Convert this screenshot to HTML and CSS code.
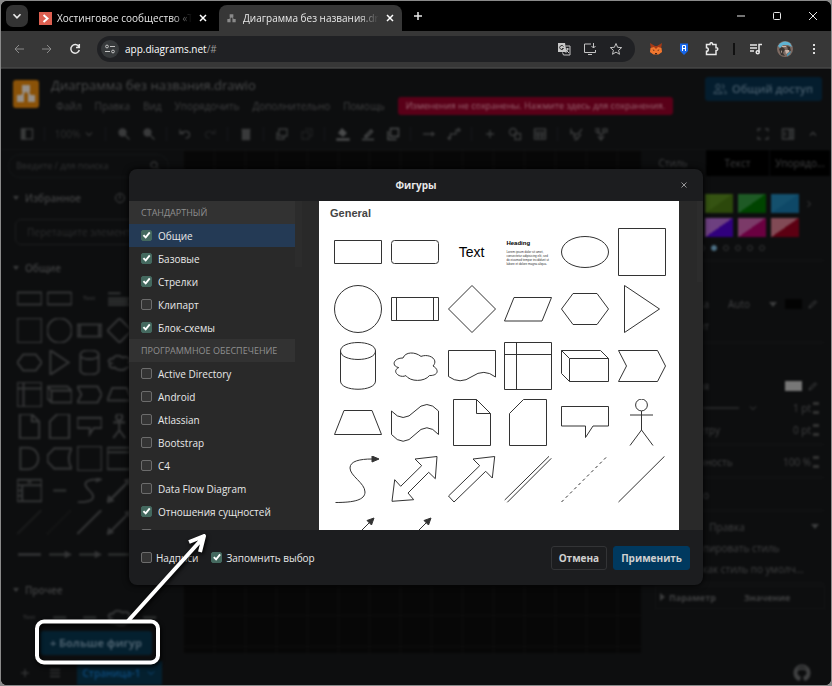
FILE: index.html
```html
<!DOCTYPE html>
<html lang="ru">
<head>
<meta charset="utf-8">
<title>Диаграмма без названия.drawio</title>
<link rel="stylesheet" href="styles.css">
</head>
<body>
<svg class="defs" aria-hidden="true">
  <symbol id="rect" viewBox="0 0 48 48"><path d="M.5 12.5h47v23H.5z"/></symbol>
  <symbol id="round" viewBox="0 0 48 48"><rect x=".5" y="12.5" width="47" height="23" rx="3"/></symbol>
  <symbol id="ellipse" viewBox="0 0 48 48"><ellipse cx="24" cy="24" rx="23.5" ry="15.5"/></symbol>
  <symbol id="square" viewBox="0 0 48 48"><path d="M.5.5h47v47H.5z"/></symbol>
  <symbol id="circle" viewBox="0 0 48 48"><circle cx="24" cy="24" r="23.5"/></symbol>
  <symbol id="process" viewBox="0 0 48 48"><path d="M.5 12.5h47v23H.5zM5.500 12.500v23M42.500 12.500v23"/></symbol>
  <symbol id="diamond" viewBox="0 0 48 48"><path d="M24 .5 47.500 24 24 47.500.5 24z"/></symbol>
  <symbol id="para" viewBox="0 0 48 48"><path d="M.5 36 10 12.500h37.500L38 36z"/></symbol>
  <symbol id="hex" viewBox="0 0 48 48"><path d="M.5 24 12 8.500h24L47.500 24 36 39.500H12z"/></symbol>
  <symbol id="tri" viewBox="0 0 48 48"><path d="M6.500.5 41.500 24 6.500 47.500z"/></symbol>
  <symbol id="cyl" viewBox="0 0 48 48"><path d="M6.500 9v30c0 11 35 11 35 0V9c0-11.300-35-11.300-35 0c0 11.300 35 11.300 35 0"/></symbol>
  <symbol id="cloud" viewBox="0 0 48 48"><path d="M12 16C2.400 16 0 24 7.700 25.600 0 29.100 8.600 36.800 14.900 33.600 19.200 40 33.600 40 38.400 33.600 48 33.600 48 27.200 42 24 48 17.600 38.400 11.200 30 14.400 24 9.600 14.400 9.600 12 16z"/></symbol>
  <symbol id="doc" viewBox="0 0 48 48"><path d="M.5 8.500h47V35Q36 26 24 34.500T.5 34.500z"/></symbol>
  <symbol id="storage" viewBox="0 0 48 48"><path d="M.5.5h47v47H.5zM12.500.5v47M.5 12.500h47"/></symbol>
  <symbol id="cube" viewBox="0 0 48 48"><path d="M.5 8.500h39l8 8v23h-39l-8-8zM.5 8.500l8 8v23M8.500 16.500h39"/></symbol>
  <symbol id="step" viewBox="0 0 48 48"><path d="M.5 8.500h39l8 15.500-8 15.500H.5L8.500 24z"/></symbol>
  <symbol id="trap" viewBox="0 0 48 48"><path d="M.5 35.500 10 11.500h28l9.500 24z"/></symbol>
  <symbol id="tape" viewBox="0 0 48 48"><path d="M.5 12Q12 25 24 12T47.500 12V35.500Q36 22 24 35.500T.5 35.500z"/></symbol>
  <symbol id="note" viewBox="0 0 48 48"><path d="M5.500.5h23l14 14v32h-37zM28.500.5v14h14"/></symbol>
  <symbol id="card" viewBox="0 0 48 48"><path d="M19.500.5h23v46h-37v-32z"/></symbol>
  <symbol id="callout" viewBox="0 0 48 48"><path d="M.5 7.500h47v19.500H32L24.500 38.500V27H.5z"/></symbol>
  <symbol id="actor" viewBox="0 0 48 48"><circle cx="23.500" cy="6" r="5.900"/><path d="M23.500 12v19M12 16h23M12 46.500 23.500 31 35 46.500"/></symbol>
  <symbol id="curve" viewBox="0 0 48 48"><path d="M1.500 46.500C20 46.500 31 44 31 36C31 27 16 20 16 12C16 5 26 3 38 3"/><path class="tip" d="M38 0 45 3 38 6z"/></symbol>
  <symbol id="biarrow" viewBox="0 0 48 48"><path d="M46 .5 24 3l6.700 6.700-21 20.600-6-6.600L1 45.300l21.700-1.600L17 37l20.700-20.700 6.600 6.400z"/></symbol>
  <symbol id="arrow" viewBox="0 0 48 48"><path d="M46.700.5 25 3l6.700 6.700L.5 40 6 46l31.700-30.700L44.300 22z"/></symbol>
  <symbol id="link" viewBox="0 0 48 48"><path d="M.7 44 45 .3M3.300 46.300 47.300 2.300"/></symbol>
  <symbol id="dashed" viewBox="0 0 48 48"><path stroke-dasharray="3 3" d="M.5 46 46 .5"/></symbol>
  <symbol id="line" viewBox="0 0 48 48"><path d="M.5 46 46.500.3"/></symbol>
  <symbol id="pointer" viewBox="0 0 48 48"><path d="M.5 44.500 36 9"/><path class="tip" d="M40 5 37.500 12 33 7.500z"/></symbol>
  <symbol id="dline" viewBox="0 0 48 48"><path d="M5 43 42 6"/><path class="tip" d="M46 2 43 11 37 5zM1 46 4 37 10 43z"/></symbol>
  <symbol id="delay" viewBox="0 0 48 48"><path d="M6.500 3.500H20C48 3.500 48 44.500 20 44.500H6.500z"/></symbol>
  <symbol id="data" viewBox="0 0 48 48"><path d="M14 4.500H47.500Q36 24 47.500 43.500H14L1 30V18z"/></symbol>
  <symbol id="frame" viewBox="0 0 48 48"><path d="M.5 3.500h47v41H.5zM.5 12h47"/></symbol>
  <symbol id="table" viewBox="0 0 48 48"><path d="M.5 3.500h47v41H.5zM.5 14h47M10 14v30M.5 24H10M.5 34H10M20 8h8"/></symbol>
  <symbol id="dash" viewBox="0 0 48 48"><path d="M12 24h25"/></symbol>
  <symbol id="hline" viewBox="0 0 48 48"><path d="M2 24h44"/></symbol>
  <symbol id="harrow" viewBox="0 0 48 48"><path d="M4 24h34"/><path class="tip" d="M36 20 44 24 36 28z"/></symbol>
  <symbol id="words" viewBox="0 0 48 48"><path d="M2 14h24M2 24h44M2 30h40M2 36h44"/></symbol>
  <symbol id="orgchart" viewBox="0 0 26 28"><path fill="none" stroke="currentColor" stroke-width="2" d="M13 9 7 19M13 9l6 10"/><path fill="currentColor" stroke="none" d="M9 5h8v7H9zM4 15h7v7H4zM15 15h7v7h-7z"/></symbol>
  <symbol id="chev" viewBox="0 0 12 12"><path d="M3 4.500 6 7.500 9 4.500"/></symbol>
  <symbol id="pencil" viewBox="0 0 12 12"><path d="M2 10 3 7.500 7 3.500 8.500 5 4.500 9zM8 2.500 10 4.500"/></symbol>
  <symbol id="cross" viewBox="0 0 12 12"><path d="M3 3 9 9M9 3 3 9"/></symbol>
</svg>

<div class="window">
  <header class="tabs">
    <button class="tab-search" aria-label="Поиск вкладок"><svg viewBox="0 0 12 12"><path d="M3 4.500 6 7.500 9 4.500"/></svg></button>
    <div class="tab">
      <svg class="favicon" viewBox="0 0 13 13"><path class="red" d="M0 0h13v13H0z"/><path class="wh" d="M4.500 3 8.500 6.500 4.500 10"/></svg>
      <span class="tab-title">Хостинговое сообщество «Tim</span>
      <button class="plain" aria-label="Закрыть"><svg class="i12"><use href="#cross"/></svg></button>
    </div>
    <div class="tab active">
      <svg class="favicon grey"><use href="#orgchart"/></svg>
      <span class="tab-title">Диаграмма без названия.draw</span>
      <button class="plain" aria-label="Закрыть"><svg class="i12"><use href="#cross"/></svg></button>
    </div>
    <button class="plain new-tab" aria-label="Новая вкладка"><svg class="i12" viewBox="0 0 12 12"><path d="M6 2v8M2 6h8"/></svg></button>
    <div class="win-controls">
      <button class="plain" aria-label="Свернуть"><svg class="i12" viewBox="0 0 12 12"><path d="M2 6h8"/></svg></button>
      <button class="plain" aria-label="Развернуть"><svg class="i12" viewBox="0 0 12 12"><rect x="2.500" y="2.500" width="7" height="7" rx="1"/></svg></button>
      <button class="plain" aria-label="Закрыть окно"><svg class="i12" viewBox="0 0 12 12"><path d="M2 2l8 8M10 2 2 10"/></svg></button>
    </div>
  </header>

  <nav class="browser-bar">
    <button class="nav dim" aria-label="Назад"><svg class="i12" viewBox="0 0 12 12"><path d="M11 6H2M6 2 2 6l4 4"/></svg></button>
    <button class="nav dim" aria-label="Вперёд"><svg class="i12" viewBox="0 0 12 12"><path d="M1 6h9M6 2l4 4-4 4"/></svg></button>
    <button class="nav" aria-label="Обновить"><svg class="i12 bold" viewBox="0 0 12 12"><path d="M9.800 3.600A4.300 4.300 0 1 0 10.300 7M10.300 1v3.500H7"/></svg></button>
    <div class="omnibox">
      <button class="site-info" aria-label="Сведения о сайте"><svg class="i12" viewBox="0 0 12 12"><circle cx="3" cy="3.500" r="1.400"/><path d="M6 3.500h5M1 8.500h5"/><circle cx="9" cy="8.500" r="1.400"/></svg></button>
      <span class="url">app.diagrams.net<i>/#</i></span>
      <svg class="i14" viewBox="0 0 14 14"><path fill="#c8c8c8" stroke="none" d="M1 1h7l1.500 9H1z"/><path stroke="#303030" d="M6.500 4.500A2 2 0 1 0 6.500 6.500H5"/><path d="M8.500 4H13v9H6.500l-1-2.500M8.500 7h4M10.500 6v1c0 2-1 3-2 4M9 8l3 3"/></svg>
      <svg class="i14" viewBox="0 0 14 14"><path d="M8 2H1.500v8.500h11V8M5 12.500h4M10.500 1v5M8.500 4l2 2 2-2"/></svg>
      <svg class="i14" viewBox="0 0 14 14"><path d="M7 1.500 8.600 5.300 12.700 5.600 9.600 8.300 10.500 12.300 7 10.100 3.500 12.300 4.400 8.300 1.300 5.600 5.400 5.300z"/></svg>
    </div>
    <div class="extensions">
      <svg class="i14" viewBox="0 0 14 14"><g stroke="none"><path fill="#a33a17" d="M1 1 6 4h2l5-3-1 6 1 3-3.500 2H4.500L1 10 2 7z"/><path fill="#f0772f" d="M1.500 6 5 5l2 2 2-2 3.500 1 .5 4-3.500 2.500h-5L1 10z"/><path fill="#452015" d="M3.500 7.500 5.500 8 5 9zM10.500 7.500 8.500 8 9 9zM6 11h2v1.200H6z"/></g></svg>
      <svg class="i14" viewBox="0 0 14 14"><path fill="#1766e8" stroke="none" d="M3 1.500h8V9L7 13 3 9z"/><path stroke="#fff" d="M5.500 9V3.500h3V9M5.500 6.500h3"/></svg>
      <svg class="i14 bold" viewBox="0 0 14 14"><path d="M1.500 2.500H5V2a1.300 1.300 0 0 1 2.600 0v.5H11v3.300h.5a1.300 1.300 0 0 1 0 2.600H11v4.100H1.500V9.300a1.800 1.800 0 0 0 0-3.600z"/></svg>
      <span class="bar-sep"></span>
      <svg class="i14 bold" viewBox="0 0 14 14"><path d="M1 3h7M1 6h7M1 9h4M10 10V2.500h3"/><circle cx="8.700" cy="10.200" r="1.500"/></svg>
      <svg class="avatar" viewBox="0 0 16 16"><g stroke="none"><circle cx="8" cy="8" r="8" fill="#7d6a62"/><path fill="#5fb2d2" d="M1 5A8 8 0 0 1 13 2L15 6 11 4 6 4 3 7z"/><path fill="#3b3532" d="M2 8 5 6l3 2-2 4 2 3-4-1zM10 5l3 1 1 4-3-1z"/><path fill="#c9b4a8" d="M5 5h4v1H5zM8 9l4 0 0 2-3 2zM4 9l1 2-1 1z"/><path fill="#4a95b3" d="M10 13l4-3-1 3-3 2.500z"/></g></svg>
      <svg class="i14" viewBox="0 0 14 14"><path fill="#ddd" stroke="none" d="M6 2h2v2H6zM6 6h2v2H6zM6 10h2v2H6z"/></svg>
    </div>
  </nav>

  <div class="stage">
    <div class="app">
      <header class="app-head">
        <svg class="logo"><use href="#orgchart"/></svg>
        <div class="head-main">
          <h1>Диаграмма без названия.drawio</h1>
          <div class="menu">
            <button>Файл</button><button>Правка</button><button>Вид</button><button>Упорядочить</button><button>Дополнительно</button><button>Помощь</button>
            <button class="unsaved">Изменения не сохранены. Нажмите здесь для сохранения.</button>
          </div>
        </div>
        <button class="share"><svg class="i14" viewBox="0 0 14 14"><circle cx="5" cy="4.500" r="2.200"/><path d="M.8 11.500c0-4 8.400-4 8.400 0zM9 2.500a2 2 0 0 1 0 4M11 8.500c2 .5 2.300 1.500 2.300 3h-2"/></svg>Общий доступ</button>
      </header>

      <div class="tools">
        <button aria-label="Панель"><svg class="i14" viewBox="0 0 14 14"><rect x="1.500" y="2" width="11" height="10"/><path fill="currentColor" d="M2 2h3v10H2z"/></svg></button><i class="sep"></i>
        <button class="zoom">100%<svg class="i12"><use href="#chev"/></svg></button><i class="sep"></i>
        <button aria-label="Увеличить"><svg class="i14" viewBox="0 0 14 14"><circle cx="5.500" cy="5.500" r="3.500" fill="currentColor"/><path d="M8 8l4.500 4.500"/></svg></button><button aria-label="Уменьшить"><svg class="i14" viewBox="0 0 14 14"><circle cx="5.500" cy="5.500" r="3.500" fill="currentColor"/><path d="M8 8l4.500 4.500"/></svg></button><i class="sep"></i>
        <button aria-label="Отменить"><svg class="i14" viewBox="0 0 14 14"><path d="M2 2.500v4h4M2.500 6.500C6 3 12 4 11.500 8c0 2-2 3-4 3"/></svg></button><button class="faint" aria-label="Повторить"><svg class="i14" viewBox="0 0 14 14"><path d="M12 2.500v4H8M11.500 6.500C8 3 2 4 2.500 8c0 2 2 3 4 3"/></svg></button><i class="sep"></i>
        <button aria-label="Удалить"><svg class="i14" viewBox="0 0 14 14"><path fill="currentColor" d="M3.500 4h7v8.500h-7zM2.500 2.500h9"/></svg></button><i class="sep"></i>
        <button aria-label="На передний план"><svg class="i14" viewBox="0 0 14 14"><path d="M4 2h8v7H4zM2 5v7h7V9"/></svg></button><button class="faint" aria-label="На задний план"><svg class="i14" viewBox="0 0 14 14"><path d="M5 2h7v7H9M2 5h7v7H2z"/></svg></button><i class="sep"></i>
        <button class="strong" aria-label="Заливка"><svg class="i14" viewBox="0 0 14 14"><path fill="currentColor" d="M3 6 6 2l4 4-3 3zM1 12h12v1H1z"/></svg></button><button class="strong" aria-label="Цвет линии"><svg class="i14" viewBox="0 0 14 14"><path d="M4 9 10 3l1.500 1.500L6 10H4zM1 12.500h12"/></svg></button><button class="strong" aria-label="Тень"><svg class="i14" viewBox="0 0 14 14"><path d="M4.500 1.500h8v8h-8zM2 4v8.500h8.500"/></svg></button><i class="sep"></i>
        <button aria-label="Соединение"><svg class="i14" viewBox="0 0 14 14"><path d="M1 7h11M9.500 5 12 7 9.500 9"/></svg></button><button aria-label="Точки"><svg class="i14" viewBox="0 0 14 14"><path d="M1 11h2.500V7H9V3h4M11 1l2 2-2 2M3 9.500 1 11l2 2"/></svg></button><i class="sep"></i>
        <button aria-label="Вставить"><svg class="i14" viewBox="0 0 14 14"><path d="M7 3v8M3 7h8"/></svg></button><button aria-label="Фигуры"><svg class="i14" viewBox="0 0 14 14"><circle cx="5" cy="5" r="3.500"/><path d="M7 6.500h5.500v6H7z"/></svg></button><button aria-label="Таблица"><svg class="i14" viewBox="0 0 14 14"><path d="M1.500 2h11v10h-11zM1.500 5.500h11M1.500 8.500h11M5 5v7M9 5v7"/></svg></button><i class="sep"></i>
        <button aria-label="Стиль"><svg class="i14" viewBox="0 0 14 14"><path d="M2 1.500v6M2 5c4 0 3 4 3 5h3M5 7h4l4-5M5 12.500h3L12 7"/></svg></button><button aria-label="Эффекты"><svg class="i14" viewBox="0 0 14 14"><path d="M1 2h4L4 6 1 4M5 5l2 3M9 2h4v3H9zM10 6 7 8v4M4 9l3 4 3-4"/></svg></button>
        <span class="grow"></span>
        <button aria-label="Полный экран"><svg class="i14" viewBox="0 0 14 14"><path d="M2 4.500V2h3M9 2h3v2.500M12 9.500V12H9M5 12H2V9.500"/></svg></button><button aria-label="Формат"><svg class="i14" viewBox="0 0 14 14"><path d="M1.500 2h11v10h-11zM8.500 2v10M4 4.500v5M10.500 2v10"/></svg></button><button aria-label="Свернуть панель"><svg class="i14" viewBox="0 0 14 14"><path d="M4 8.500 7 5.500 10 8.500"/></svg></button>
      </div>

      <div class="work">
        <aside class="side">
          <label class="search"><input type="text" placeholder="Введите / для поиска" aria-label="Поиск фигур"><svg class="i12 bold" viewBox="0 0 12 12"><circle cx="5" cy="5" r="3"/><path d="M7 7l4 4"/></svg></label>
          <div class="group first"><span class="caret"></span><b>Избранное</b><span class="grow"></span><svg class="i12" viewBox="0 0 12 12"><circle cx="6" cy="6" r="4.500"/><path d="M6 3v4"/></svg><span>+</span></div>
          <div class="drop">Перетащите элементы сюда</div>
          <div class="group"><span class="caret"></span><b>Общие</b></div>
          <div class="stencils">
            <svg><use href="#rect"/></svg><svg><use href="#round"/></svg><small>Text</small><svg><use href="#words"/></svg><svg><use href="#ellipse"/></svg>
            <svg><use href="#square"/></svg><svg><use href="#circle"/></svg><svg><use href="#process"/></svg><svg><use href="#diamond"/></svg><svg><use href="#para"/></svg>
            <svg><use href="#hex"/></svg><svg><use href="#tri"/></svg><svg><use href="#cyl"/></svg><svg><use href="#cloud"/></svg><svg><use href="#doc"/></svg>
            <svg><use href="#storage"/></svg><svg><use href="#cube"/></svg><svg><use href="#step"/></svg><svg><use href="#trap"/></svg><svg><use href="#tape"/></svg>
            <svg><use href="#note"/></svg><svg><use href="#card"/></svg><svg><use href="#callout"/></svg><svg><use href="#actor"/></svg><svg><use href="#circle"/></svg>
            <svg><use href="#delay"/></svg><svg><use href="#data"/></svg><svg><use href="#square"/></svg><svg><use href="#frame"/></svg><svg><use href="#frame"/></svg>
            <svg><use href="#table"/></svg><svg><use href="#dash"/></svg><svg><use href="#curve"/></svg><svg class="thick"><use href="#dline"/></svg><svg><use href="#arrow"/></svg>
            <svg class="faint"><use href="#line"/></svg><svg class="faint"><use href="#dashed"/></svg><svg><use href="#line"/></svg><svg><use href="#dline"/></svg><svg><use href="#pointer"/></svg>
            <svg class="thick"><use href="#hline"/></svg><svg><use href="#harrow"/></svg><svg><use href="#harrow"/></svg><svg><use href="#hline"/></svg><svg><use href="#hline"/></svg>
          </div>
          <div class="group"><span class="caret"></span><b>Прочее</b></div>
          <div class="stencils misc">
            <small>Text</small><svg><use href="#dash"/></svg><svg><use href="#dash"/></svg><svg><use href="#cloud"/></svg><svg><use href="#dash"/></svg>
          </div>
          <button class="more">+ Больше фигур</button>
        </aside>

        <main class="canvas"></main>

        <aside class="format">
          <div class="format-tabs"><button class="on">Стиль</button><button>Текст</button><button>Упорядо...</button></div>
          <section class="styles">
            <div class="swatches"><i class="s1"></i><i class="s2"></i><i class="s3"></i><i class="s4"></i><i class="s5"></i><i class="s6"></i></div>
            <svg class="i12 next" viewBox="0 0 12 12"><path d="M4.500 3 7.500 6 4.500 9"/></svg>
            <div class="dots"><i></i><i class="on"></i><i></i><i></i><i></i><i></i></div>
          </section>
          <section class="s-fill">
            <div class="row"><span class="name">Заливка</span><span class="mid">Auto</span><span class="tri"></span><i class="chip black"></i><svg class="i12"><use href="#pencil"/></svg></div>
            <div class="row"><span class="name">Градиент</span></div>
          </section>
          <section class="s-line">
            <div class="row"><span class="name">Линия</span><span class="grow"></span><i class="chip white"></i><svg class="i12"><use href="#pencil"/></svg></div>
            <div class="row"><span class="rule"></span><svg class="i12"><use href="#chev"/></svg><span class="val">1 pt</span><span class="spin"></span></div>
            <div class="row"><span class="name wide">По периметру</span><span class="val">0 pt</span><span class="spin"></span></div>
          </section>
          <section class="s-one">
            <div class="row"><span class="name wide">Непрозрачность</span><span class="val">100 %</span><span class="spin"></span></div>
          </section>
          <section class="s-one"><div class="row"><span class="name">Эскизно</span></div></section>
          <section class="s-edit">
            <div class="row box"><span class="center">Правка</span><span class="tri"></span></div>
            <div class="row box"><span class="center">Копировать стиль</span></div>
            <div class="row box"><span class="center">Задать как стиль по умолч...</span></div>
          </section>
          <table class="props"><tr><th><span class="side-tri"></span>Параметр</th><th>Значение</th></tr></table>
        </aside>
      </div>

      <footer class="pages">
        <button aria-label="Добавить страницу"><svg class="i14" viewBox="0 0 14 14"><path d="M7 3v8M3 7h8"/></svg></button>
        <button aria-label="Страницы"><svg class="i14" viewBox="0 0 14 14"><path d="M2 3.500h10M2 7h10M2 10.500h10"/></svg></button>
        <button class="page">Страница-1<svg class="i12"><use href="#chev"/></svg></button>
        <span class="grow"></span>
        <svg class="github" viewBox="0 0 18 18"><path d="M6.500 16v-3C3 13 2.500 6 5.500 5.500 7 4.500 11 4.500 12.500 5.500c3 .5 2.500 7.500-1 7.500v3M6.500 16A7.500 7.500 0 1 1 11.500 16"/></svg>
      </footer>
    </div>

    <div class="veil">
      <div class="dialog" role="dialog" aria-labelledby="dlg">
        <header class="dlg-head"><h2 id="dlg">Фигуры</h2><button class="plain close" aria-label="Закрыть"><svg class="i12"><use href="#cross"/></svg></button></header>
        <div class="dlg-body">
          <div class="list">
            <h3>СТАНДАРТНЫЙ</h3>
            <label class="sel"><input type="checkbox" checked>Общие</label>
            <label><input type="checkbox" checked>Базовые</label>
            <label><input type="checkbox" checked>Стрелки</label>
            <label><input type="checkbox">Клипарт</label>
            <label><input type="checkbox" checked>Блок-схемы</label>
            <h3>ПРОГРАММНОЕ ОБЕСПЕЧЕНИЕ</h3>
            <label><input type="checkbox">Active Directory</label>
            <label><input type="checkbox">Android</label>
            <label><input type="checkbox">Atlassian</label>
            <label><input type="checkbox">Bootstrap</label>
            <label><input type="checkbox">C4</label>
            <label><input type="checkbox">Data Flow Diagram</label>
            <label><input type="checkbox" checked>Отношения сущностей</label>
            <label><input type="checkbox" aria-label="Ещё"></label>
          </div>
          <span class="thumb"></span>
          <div class="preview">
            <h4>General</h4>
            <div class="shapes">
              <svg><use href="#rect"/></svg><svg><use href="#round"/></svg><span class="t-text">Text</span><div class="t-head"><b>Heading</b><p>Lorem ipsum dolor sit amet,<br>consectetur adipisicing elit, sed<br>do eiusmod tempor incididunt ut<br>labore et dolore magna aliqua.</p></div><svg><use href="#ellipse"/></svg><svg><use href="#square"/></svg>
              <svg><use href="#circle"/></svg><svg><use href="#process"/></svg><svg><use href="#diamond"/></svg><svg><use href="#para"/></svg><svg><use href="#hex"/></svg><svg><use href="#tri"/></svg>
              <svg><use href="#cyl"/></svg><svg><use href="#cloud"/></svg><svg><use href="#doc"/></svg><svg><use href="#storage"/></svg><svg><use href="#cube"/></svg><svg><use href="#step"/></svg>
              <svg><use href="#trap"/></svg><svg><use href="#tape"/></svg><svg><use href="#note"/></svg><svg><use href="#card"/></svg><svg><use href="#callout"/></svg><svg><use href="#actor"/></svg>
              <svg><use href="#curve"/></svg><svg><use href="#biarrow"/></svg><svg><use href="#arrow"/></svg><svg><use href="#link"/></svg><svg><use href="#dashed"/></svg><svg><use href="#line"/></svg>
              <svg><use href="#pointer"/></svg><svg><use href="#pointer"/></svg>
            </div>
          </div>
          <span class="thumb right"></span>
        </div>
        <footer class="dlg-foot">
          <label><input type="checkbox">Надписи</label>
          <label><input type="checkbox" checked>Запомнить выбор</label>
          <span class="grow"></span>
          <button class="btn">Отмена</button>
          <button class="btn primary">Применить</button>
        </footer>
      </div>
    </div>

    <svg class="mark" viewBox="0 0 220 160" aria-hidden="true">
      <rect x="36" y="96.500" width="121" height="41" rx="7"/>
      <path d="M127 96 201 14M188 17 203 11 199 27"/>
    </svg>
  </div>
</div>
</body>
</html>
```
FILE: styles.css
```css
* { box-sizing: border-box; }
html { background: #8a8a8a; }
body {
  margin: 0;
  padding: 1px;
  min-height: 100vh;
  display: flex;
  font: 10px/16px "Open Sans", "Noto Sans", sans-serif;
  color: #e8e8e8;
}
button, input { font: inherit; color: inherit; border: 0; background: none; padding: 0; margin: 0; }
h1, h2, h3, h4, p { margin: 0; }
svg { display: block; flex: none; fill: none; stroke: currentColor; stroke-width: 1; }
.defs { position: absolute; width: 0; height: 0; }
.tip { fill: currentColor; }
.i12 { width: 12px; height: 12px; }
.i14 { width: 14px; height: 14px; }
.bold { stroke-width: 1.5; }
.grow { flex: 1; }
.plain { display: grid; place-items: center; }

.window { flex: 1; min-width: 0; display: flex; flex-direction: column; background: #000; border-radius: 6px; overflow: hidden; }

/* browser tabs */
.tabs { display: flex; align-items: flex-end; height: 30px; background: #000; }
.tab-search { width: 22px; height: 22px; margin: 0 5px 4px; border-radius: 7px; background: #333; display: grid; place-items: center; }
.tab-search svg { width: 14px; height: 14px; stroke-width: 1.5; }
.tab { display: flex; align-items: center; width: 182px; height: 26px; padding: 0 6px; gap: 5px; border-radius: 8px 8px 0 0; }
.tab.active { background: #373737; width: 183px; margin-left: 4px; }
.favicon { width: 13px; height: 13px; }
.favicon.grey { color: #8a8a8a; }
.red { fill: #dd5f50; stroke: none; }
.wh { stroke: #fff; stroke-width: 2; }
.tab-title { flex: 1; overflow: hidden; white-space: nowrap; mask-image: linear-gradient(90deg, #000 85%, transparent); }
.tab .plain { color: #fff; }
.tab .plain svg, .new-tab svg { stroke-width: 1.5; }
.new-tab { width: 32px; height: 26px; }
.tabs .plain { align-self: center; }
.win-controls { margin-left: auto; display: flex; align-self: center; }
.win-controls .plain { width: 36px; height: 26px; }

/* address bar */
.browser-bar { display: flex; align-items: center; height: 38px; padding: 0 10px 0 4px; background: #373737; border-bottom: 2px solid #484848; }
.nav { width: 28px; height: 24px; display: grid; place-items: center; }
.nav.dim { color: #8b8b8b; }
.omnibox { flex: 1; display: flex; align-items: center; gap: 12px; height: 26px; margin-left: 8px; padding: 0 12px 0 4px; border-radius: 13px; background: #202124; color: #c4c4c4; }
.site-info { width: 18px; height: 18px; border-radius: 50%; background: #373a3c; display: grid; place-items: center; }
.url { flex: 1; margin-left: -6px; color: #fff; }
.url i { font-style: normal; color: #9a9a9a; }
.extensions { display: flex; align-items: center; gap: 14px; margin-left: 14px; }
.bar-sep { width: 2px; height: 12px; background: #111; }
.avatar { width: 16px; height: 16px; }

/* blurred editor behind the dialog */
.stage { position: relative; flex: 1; display: flex; background: #0d0e0f; }
.app { flex: 1; min-width: 0; display: flex; flex-direction: column; background: #0d0e0f; color: #404142; filter: blur(1px); }
.app-head { display: flex; align-items: flex-start; height: 49px; padding: 8px 9px 0 12px; }
.logo { width: 26px; height: 28px; margin-top: 3px; border-radius: 3px; background: #8a5208; color: #96908a; }
.head-main { flex: 1; min-width: 0; margin-left: 12px; }
h1 { font-size: 13px; line-height: 17px; font-weight: 400; color: #4a4b4c; }
.menu { display: flex; align-items: center; gap: 13px; margin-top: 3px; padding-left: 5px; white-space: nowrap; }
.menu button { height: 18px; line-height: 18px; }
.menu .unsaved { padding: 0 8px; border-radius: 3px; background: #590018; color: #9a6673; font-size: 9px; font-weight: 500; }
.share { display: flex; align-items: center; gap: 5px; height: 24px; padding: 0 9px 0 8px; border-radius: 3px; background: #041d2e; color: #465b6a; font-size: 11px; font-weight: 600; white-space: nowrap; }
.tools { display: flex; align-items: center; height: 32px; padding: 0 6px 0 13px; border-bottom: 1px solid #121415; color: #393a3b; }
.tools button { width: 25px; height: 24px; display: flex; align-items: center; justify-content: center; }
.tools svg { stroke-width: 1.4; }
.tools .zoom { width: 50px; gap: 3px; color: #2f3031; }
.tools .faint { color: #1e1f20; }
.tools .strong { color: #4a4b4c; }
.sep { width: 1px; height: 14px; margin: 0 5px; background: #16181a; }
.work { flex: 1; display: grid; grid-template-columns: 182px minmax(0, 1fr) 190px; min-height: 0; }

.side { display: flex; flex-direction: column; min-width: 0; padding-top: 4px; }
.search { display: flex; align-items: center; height: 24px; margin: 0 14px 0 7px; padding: 0 7px; border: 1px solid #141617; border-radius: 12px; color: #2f3031; }
.search input { flex: 1; min-width: 0; font-size: 9px; }
.search input::placeholder { color: #333435; opacity: 1; }
.group { display: flex; align-items: center; gap: 6px; height: 24px; padding: 0 45px 0 12px; }
.group.first { margin-top: 8px; }
.group b { font-weight: 600; }
.caret { border: 3px solid transparent; border-top: 4px solid #3c3d3e; border-bottom: 0; }
.drop { height: 26px; margin: 9px 14px 11px; padding-left: 11px; border: 1px solid #1c1d1e; border-radius: 6px; line-height: 24px; color: #2d2e2f; white-space: nowrap; overflow: hidden; }
.stencils { display: grid; grid-template-columns: repeat(5, 30px); grid-auto-rows: 32px; padding: 2px 0 0 13px; place-items: center; color: #333435; }
.stencils svg { width: 25px; height: 25px; stroke-width: 4; overflow: visible; }
.stencils small { font: bold 6px/8px "Liberation Sans", sans-serif; }
.stencils .thick { stroke-width: 5; }
.stencils .faint { color: #1b1c1c; }
.side > .stencils + .group { margin-top: 8px; }
.side > .misc { grid-auto-rows: 26px; height: 28px; overflow: hidden; }
.more { width: 112px; height: 24px; margin: 1px 0 0 39px; border-radius: 3px; background: #04202f; color: #4a5f6d; font-size: 11px; font-weight: 700; white-space: nowrap; }

.canvas { margin-bottom: 8px; background: repeating-linear-gradient(90deg, #0e0e0e 0 1px, transparent 1px 31px), repeating-linear-gradient(#0e0e0e 0 1px, transparent 1px 31px), #070707; }

.format { min-width: 0; overflow: hidden; }
.format-tabs { display: grid; grid-template-columns: 65px 64px 61px; }
.format-tabs button { height: 26px; background: #000; border-right: 1px solid #0d0e0f; }
.format-tabs .on { background: none; }
.format section { border-bottom: 1px solid #141516; margin: 0 7px 0 10px; }
.format .styles { display: grid; grid-template-columns: 1fr 25px; align-content: start; height: 85px; padding-top: 18px; }
.swatches { display: grid; grid-template-columns: repeat(3, 28px); gap: 5px; justify-content: end; }
.swatches i { height: 19px; }
.s1 { background: linear-gradient(145deg, #355312 50%, #2c480b 50%); }
.s2 { background: linear-gradient(145deg, #1e5a25 50%, #004400 50%); }
.s3 { background: linear-gradient(145deg, #14506d 50%, #0e4867 50%); }
.s4 { background: linear-gradient(145deg, #6d4080 50%, #30007d 50%); }
.s5 { background: linear-gradient(145deg, #7b3a68 50%, #6a0040 50%); }
.s6 { background: linear-gradient(145deg, #814a55 50%, #5c0012 50%); }
.next { margin: 4px 0 0 4px; }
.dots { grid-column: 1 / -1; display: flex; gap: 6px; justify-content: flex-end; padding: 8px 59px 0 0; }
.dots i { width: 6px; height: 6px; border: 1px solid #333435; border-radius: 50%; }
.dots .on { background: #4d7085; border-color: #4d7085; }
.s-fill { padding: 32px 0 5px; }
.s-line { padding: 32px 0 3px; }
.s-one { padding: 6px 0 4px; }
.s-edit { padding: 5px 0 4px; }
.row { display: flex; align-items: center; gap: 8px; height: 22px; white-space: nowrap; padding-right: 5px; }
.row .chip + svg { margin: 0 0 0 -3px; }
.box { height: 21px; }
.name { width: 58px; text-align: right; }
.name.wide { width: auto; flex: 1; text-align: left; }
.mid { flex: 1; text-align: center; }
.tri { border: 4px solid transparent; border-top: 5px solid #3c3d3e; border-bottom: 0; }
.chip { width: 17px; height: 10px; }
.black { background: #030303; }
.white { background: #777; }
.rule { flex: 1; height: 2px; background: #252627; }
.val { width: 44px; text-align: right; }
.spin { width: 6px; height: 12px; margin-left: -6px; background: linear-gradient(#333 0 3px, transparent 3px 9px, #333 9px); }
.center { flex: 1; text-align: center; }
.side-tri { display: inline-block; margin-right: 4px; border: 4px solid transparent; border-left: 5px solid #3c3d3e; border-right: 0; }
.props { width: 170px; margin: 2px 0 0 14px; border-collapse: collapse; border: 1px solid #131415; }
.props th { width: 50%; height: 22px; padding: 0 4px; text-align: left; font-weight: 700; font-size: 9px; }

.pages { display: flex; align-items: center; height: 24px; padding: 0 20px 0 16px; }
.pages > button { width: 15px; height: 24px; margin-right: 15px; display: flex; align-items: center; justify-content: center; }
.pages .page { width: 85px; margin: 0; gap: 4px; background: #04202f; color: #0d4a7c; font-weight: 600; }
.github { width: 18px; height: 18px; stroke-width: 2; }

/* shapes dialog */
.veil { position: absolute; inset: 0; display: grid; place-items: center; }
.dialog { width: 574px; max-width: 100%; display: flex; flex-direction: column; border-radius: 8px; overflow: hidden; background: #1c1d1f; box-shadow: 0 0 6px #000; }
.dlg-head { display: grid; grid-template-columns: 38px 1fr 38px; align-items: center; height: 32px; }
.dlg-head h2 { grid-column: 2; text-align: center; font-size: 10px; font-weight: 700; }
.close { height: 24px; color: #b0b0b0; }
.close svg { width: 10px; height: 10px; }
.dlg-body { display: grid; grid-template-columns: 166px 24px 1fr 24px; height: 329px; background: #292929; }
.list { overflow: hidden; }
.list h3 { height: 23px; padding-left: 12px; font-size: 9px; line-height: 23px; font-weight: 500; color: #8f8f8f; background: #323232; white-space: nowrap; }
.list label { display: flex; align-items: center; gap: 6px; height: 23px; padding-left: 12px; white-space: nowrap; }
.list .sel { background: #243a55; }
input[type="checkbox"] { appearance: none; flex: none; width: 11px; height: 11px; border: 1px solid #6c6c6c; border-radius: 2px; background: #343434; display: grid; place-items: center; }
input[type="checkbox"]:checked { background: #44695f; border-color: #44695f; }
input[type="checkbox"]:checked::before { content: ""; width: 9px; height: 9px; background: #fff; clip-path: polygon(8% 52%, 24% 38%, 40% 56%, 78% 8%, 94% 22%, 42% 86%); }
.thumb { width: 7px; height: 66px; background: #2c2c2c; }
.thumb.right { justify-self: end; margin-right: 1px; width: 5px; height: 81px; }
.preview { overflow: hidden; padding: 4px 13px 0 15px; background: #fff; color: #333; font-family: "Liberation Sans", Arial, sans-serif; }
.preview h4 { margin: 0 0 7px -4px; font-size: 11px; line-height: 16px; color: #444; }
.shapes { display: grid; grid-template-columns: repeat(6, 48px); grid-auto-rows: 48px; row-gap: 9px; justify-content: space-between; }
.shapes > svg { width: 48px; height: 48px; }
.shapes .tip { fill: #000; }
.t-text { align-self: center; text-align: center; font-size: 14px; color: #000; }
.t-head { padding: 12px 0 0 2px; white-space: nowrap; }
.t-head b { display: block; font-size: 6px; line-height: 7px; color: #000; }
.t-head p { margin-top: 3px; font-size: 3px; line-height: 4px; }
.dlg-foot { display: flex; align-items: center; height: 55px; padding: 0 13px 0 12px; white-space: nowrap; }
.dlg-foot label { display: flex; align-items: center; gap: 4px; margin-right: 13px; }
.btn { height: 24px; padding: 0 7px; border: 1px solid #333436; border-radius: 3px; font-weight: 700; color: #d0d0d0; }
.primary { margin-left: 6px; border-color: #00395f; background: #00395f; }

/* callout arrow */
.mark { position: absolute; left: 0; bottom: 0; width: 220px; height: 160px; stroke: #fff; stroke-width: 4; stroke-linejoin: round; pointer-events: none; filter: drop-shadow(1px 2px 2px #000); }
```
